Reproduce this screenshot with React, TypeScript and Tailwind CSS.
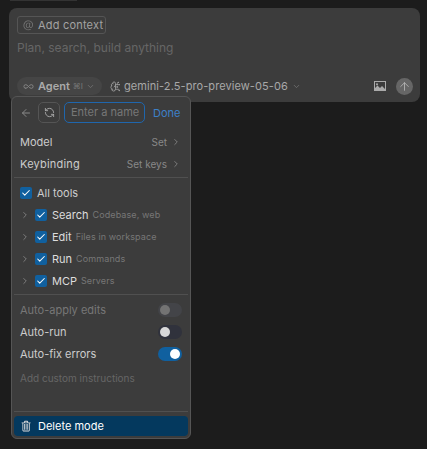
import { ArrowLeft, ArrowUp, ChevronDown, ChevronRight, Infinity as InfinityIcon, Check, RefreshCcw, BrainCircuit } from "lucide-react";
import { VscMention, VscTrash } from "react-icons/vsc";

const tools = [
  { name: "Search", desc: "Codebase, web" },
  { name: "Edit", desc: "Files in workspace" },
  { name: "Run", desc: "Commands" },
  { name: "MCP", desc: "Servers" },
];

function Box() {
  return (
    <span className="flex h-3 w-3 shrink-0 items-center justify-center rounded-[2px] bg-[#10609f]">
      <Check size={10} strokeWidth={2.5} className="text-white" />
    </span>
  );
}

function Toggle({ on, dim }: { on?: boolean; dim?: boolean }) {
  return (
    <span className={`flex h-[14px] w-6 items-center rounded-full px-[2px] ${on ? "justify-end bg-[#10609f]" : dim ? "bg-[#434448]" : "bg-[#30323c]"}`}>
      <span className={`h-[10px] w-[10px] rounded-full ${on ? "bg-white" : dim ? "bg-[#737373]" : "bg-[#d8d8d8]"}`} />
    </span>
  );
}

export default function App() {
  return (
    <div className="relative h-[449px] w-[427px] overflow-hidden bg-[#1c1c1c] pt-2 pl-[9px] font-['Inter',sans-serif] text-[11px]">
      {/* cut off row above the prompt box */}
      <div className="absolute top-0 left-[10px] h-px w-[67px] bg-[#333]" />

      {/* Prompt box */}
      <div className="flex h-[94px] w-[411px] flex-col rounded-lg bg-[#3c3c3c] px-2 pt-2">
        <div className="flex h-[18px] w-[89px] items-center gap-1 rounded-[3px] border border-[#555] pl-1 text-[#a3a3a3]">
          <VscMention size={12} className="text-[#777]" />
          <span className="tracking-[0.2px]">Add context</span>
        </div>
        <div className="mt-[5px] text-[12px] leading-[18px] text-[#666]">Plan, search, build anything</div>
        <div className="mt-[20px] flex items-center">
          <div className="flex h-[18px] w-[85px] items-center rounded-full bg-[#454545] pl-[6px] text-[#aaa]">
            <InfinityIcon size={11} className="text-[#888]" />
            <span className="ml-[4px] font-semibold">Agent</span>
            <span className="ml-[3px] text-[8px] text-[#777]">⌘I</span>
            <ChevronDown size={9} className="ml-[3px] text-[#777]" />
          </div>
          <BrainCircuit size={11} className="ml-2 text-[#999]" />
          <span className="ml-[3px] tracking-[0.08px] text-[#a8a8a8]">gemini-2.5-pro-preview-05-06</span>
          <ChevronDown size={9} className="ml-1 text-[#777]" />
          <svg viewBox="0 0 12 10" className="ml-auto h-[10px] w-3" aria-hidden="true">
            <path fill="#aaa" fillRule="evenodd" d="M0 0h12v10H0zM1 1v6l2.5-2.5L6 7l2-2 3 3V1zM3 2.2a1 1 0 1 0 .01 0z" />
          </svg>
          <span className="mr-[-1px] ml-[10px] flex h-[17px] w-[17px] items-center justify-center rounded-full bg-[#666]">
            <ArrowUp size={13} strokeWidth={1.5} className="text-[#bbb]" />
          </span>
        </div>
      </div>

      {/* Mode menu */}
      <div className="absolute top-[96px] left-[11px] flex h-[343px] w-[180px] flex-col rounded-md border border-[#555] bg-[#3c3c3c] px-[2px] pb-[2px] text-[#ccc]">
        <div className="flex h-[34px] items-start pt-[5px] pl-[6px]">
          <ArrowLeft size={12} className="mt-[5px] text-[#888]" />
          <span className="ml-[6px] flex h-[21px] w-[22px] items-center justify-center rounded-[5px] border border-[#555]">
            <RefreshCcw size={11} className="text-[#aaa]" />
          </span>
          <span className="ml-[4px] flex h-[21px] w-[81px] items-center overflow-hidden rounded-[5px] border border-[#1f66ad] pl-[6px] whitespace-nowrap text-[#777]">Enter a name</span>
          <span className="ml-2 pt-[3px] text-[#3d80c8]">Done</span>
        </div>
        <div className="flex h-[22px] items-center justify-between pr-[7px] pl-[6px]">
          <span>Model</span>
          <span className="flex items-center gap-1 text-[10px] text-[#888]">Set <ChevronRight size={10} /></span>
        </div>
        <div className="flex h-[22px] items-center justify-between pr-[7px] pl-[6px]">
          <span className="tracking-[0.2px]">Keybinding</span>
          <span className="flex items-center gap-1 text-[10px] text-[#888]">Set keys <ChevronRight size={10} /></span>
        </div>
        <div className="mt-[2px] h-px bg-[#505050]" />
        <div className="flex h-[26px] items-center gap-[5px] pt-1 pl-[6px]">
          <Box />
          <span>All tools</span>
        </div>
        {tools.map((t) => (
          <div key={t.name} className="flex h-[22px] items-center pl-[6px]">
            <ChevronRight size={10} className="text-[#888]" />
            <span className="ml-[5px]"><Box /></span>
            <span className="ml-[5px] text-[#ddd]">{t.name}</span>
            <span className="ml-[4px] text-[9px] tracking-[0.1px] text-[#777]">{t.desc}</span>
          </div>
        ))}
        <div className="mt-[2px] h-px bg-[#505050]" />
        <div className="mt-1 flex h-[22px] items-center justify-between pr-[6px] pl-[6px] text-[#777]">
          <span>Auto-apply edits</span>
          <Toggle dim />
        </div>
        <div className="flex h-[22px] items-center justify-between pr-[6px] pl-[6px]">
          <span>Auto-run</span>
          <Toggle />
        </div>
        <div className="flex h-[22px] items-center justify-between pr-[6px] pl-[6px]">
          <span>Auto-fix errors</span>
          <Toggle on />
        </div>
        <div className="mt-[6px] flex h-[14px] items-center pl-[6px] text-[10px] text-[#666]">Add custom instructions</div>
        <div className="mt-auto h-px bg-[#505050]" />
        <div className="mt-1 flex h-[20px] items-center gap-[5px] rounded-[4px] bg-[#04395e] pl-[6px] text-white">
          <VscTrash size={13} className="text-[#ddd]" />
          <span>Delete mode</span>
        </div>
      </div>
    </div>
  );
}
